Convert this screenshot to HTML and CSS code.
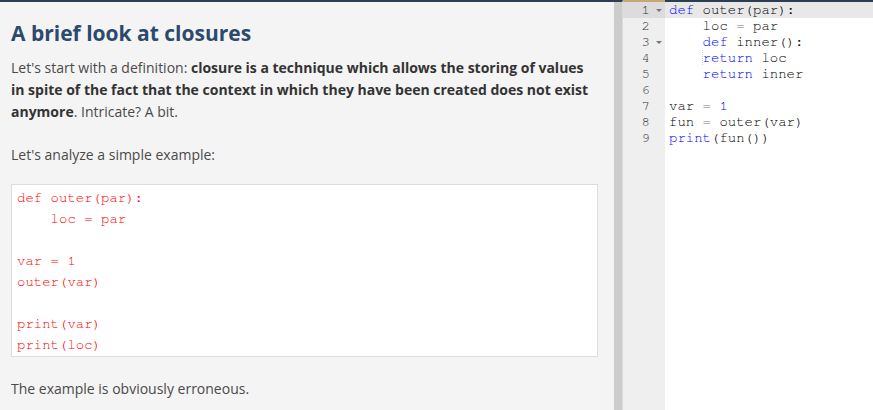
FILE: index.html
```html
<!DOCTYPE html>
<html>
<head>
<meta charset="utf-8">
<link rel="stylesheet" href="styles.css">
</head>
<body>
<div class="page">
  <section class="lesson">
    <h1 class="title">A brief look at closures</h1>
    <p class="text first">Let's start with a definition: <b>closure is a technique which allows the storing of values in spite of the fact that the context in which they have been created does not exist anymore</b>. Intricate? A bit.</p>
    <p class="text">Let's analyze a simple example:</p>
    <pre class="sample">def outer(par):
    loc = par

var = 1
outer(var)

print(var)
print(loc)</pre>
    <p class="text">The example is obviously erroneous.</p>
  </section>
  <div class="splitter"></div>
  <div class="editor">
    <div class="gutter">
      <div class="gl active"><span>1</span><i class="fold"></i></div>
      <div class="gl"><span>2</span><i class="nofold"></i></div>
      <div class="gl"><span>3</span><i class="fold"></i></div>
      <div class="gl"><span>4</span><i class="nofold"></i></div>
      <div class="gl"><span>5</span><i class="nofold"></i></div>
      <div class="gl"><span>6</span><i class="nofold"></i></div>
      <div class="gl"><span>7</span><i class="nofold"></i></div>
      <div class="gl"><span>8</span><i class="nofold"></i></div>
      <div class="gl"><span>9</span><i class="nofold"></i></div>
    </div>
    <div class="code">
      <div class="cl active"><span class="kw">def</span> outer(par):</div>
      <div class="cl">    loc <span class="op">=</span> par</div>
      <div class="cl">    <span class="kw">def</span> inner():</div>
      <div class="cl"><span class="guide">    </span><span class="kw">return</span> loc</div>
      <div class="cl">    <span class="kw">return</span> inner</div>
      <div class="cl"> </div>
      <div class="cl">var <span class="op">=</span> <span class="num">1</span></div>
      <div class="cl">fun <span class="op">=</span> outer(var)</div>
      <div class="cl"><span class="kw">print</span>(fun())</div>
    </div>
  </div>
</div>
</body>
</html>
```

FILE: styles.css
```css
html, body {
  margin: 0;
  padding: 0;
  height: 100%;
  overflow: hidden;
}

.page {
  display: flex;
  height: 410px;
  width: 873px;
}

.lesson {
  box-sizing: border-box;
  width: 614px;
  flex: none;
  background: #f4f4f4;
  border-top: 2px solid #2c3e50;
  padding: 0 16px 0 11px;
  font-family: "Open Sans", "Liberation Sans", sans-serif;
  overflow: hidden;
}

.title {
  margin: 16px 0 0;
  font-size: 21px;
  line-height: 30px;
  font-weight: 700;
  color: #2c4a6d;
}

.text {
  margin: 0 0 21px;
  font-size: 14px;
  line-height: 22px;
  color: #4a4a4a;
}

.text.first {
  margin-top: 9px;
}

.text b {
  color: #333333;
  font-weight: 700;
}

.sample {
  margin: -3px 0 21px;
  padding: 3px 5px 0;
  background: #ffffff;
  border: 1px solid #dddddd;
  font-family: "Nimbus Mono PS", "FreeMono", "Courier New", "Liberation Mono", monospace;
  font-size: 14px;
  line-height: 21px;
  color: #ff0000;
}

.splitter {
  flex: none;
  width: 8px;
  background: #cccccc;
  border-top: 2px solid #2c3e50;
  border-right: 1px solid #dadada;
}

.editor {
  flex: 1;
  display: flex;
  font-family: "Nimbus Mono PS", "FreeMono", "Courier New", "Liberation Mono", monospace;
  font-size: 14px;
  line-height: 16px;
}

.gutter {
  flex: none;
  width: 42px;
  background: #efefef;
  border-top: 2px solid #c9a878;
  color: #333333;
}

.gl {
  display: flex;
  justify-content: flex-end;
  align-items: center;
  height: 16px;
}

.gl.active {
  background: #dcdcdc;
}

.gl i {
  display: block;
  width: 15px;
  height: 16px;
  position: relative;
}

.gl i.fold::after {
  content: "";
  position: absolute;
  left: 6px;
  top: 7px;
  border-left: 3px solid transparent;
  border-right: 3px solid transparent;
  border-top: 3px solid #777777;
}

.code {
  flex: 1;
  background: #ffffff;
  border-top: 2px solid #2c3e50;
  color: #000000;
}

.cl {
  height: 16px;
  padding-left: 4px;
  white-space: pre;
}

.cl.active {
  background: #e8e8e8;
}

.kw {
  color: #0000ff;
}

.num {
  color: #0000cd;
}

.op {
  color: #687687;
}

.guide {
  display: inline-block;
  height: 16px;
  vertical-align: top;
  background-image: linear-gradient(#cfcfcf 50%, transparent 50%);
  background-size: 1px 2px;
  background-repeat: repeat-y;
  background-position: 33px 0;
}
```
